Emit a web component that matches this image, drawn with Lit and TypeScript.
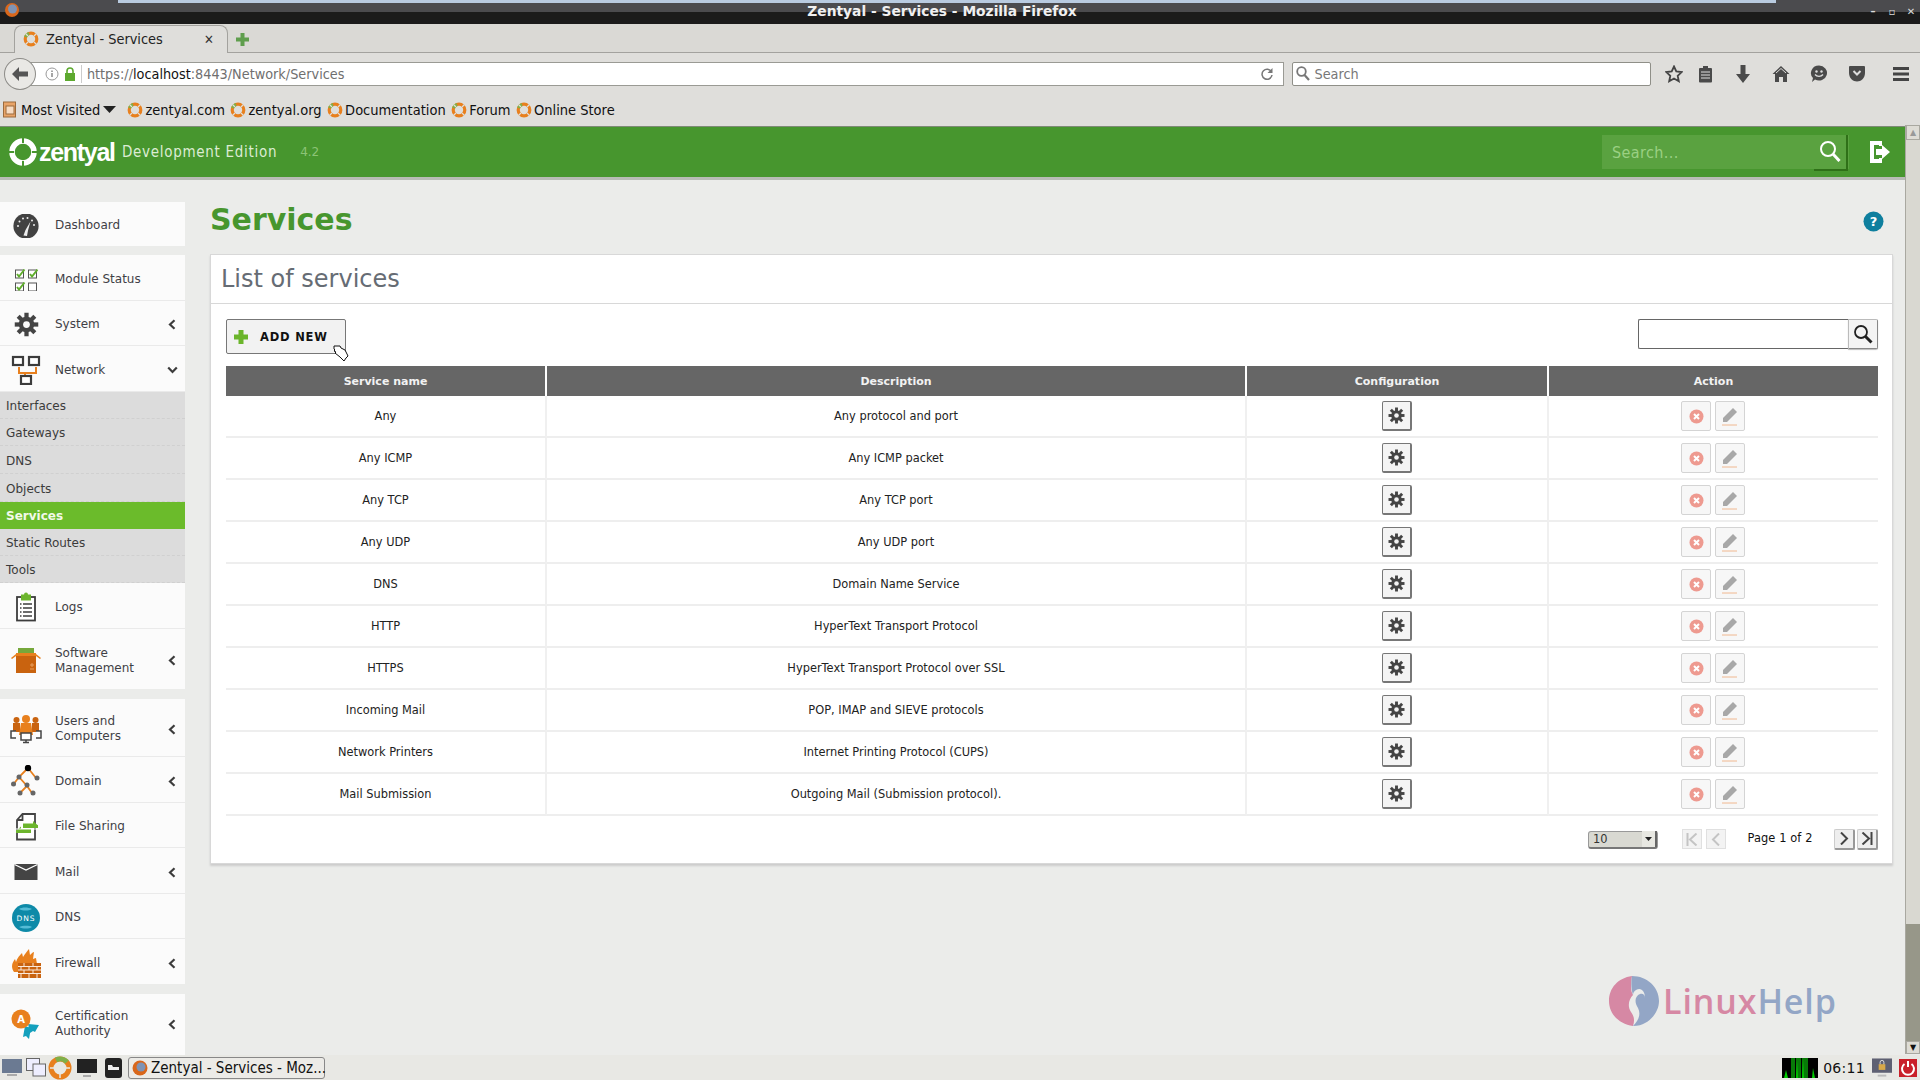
import { LitElement, html, css, svg } from "lit";
import { customElement } from "lit/decorators.js";

const gearShape = (c: string, hole: string) => svg`
  ${[0, 45, 90, 135].map(a => svg`<rect x="8.3" y="0.6" width="3.4" height="18.8" fill=${c} transform="rotate(${a} 10 10)"/>`)}
  <circle cx="10" cy="10" r="6.2" fill=${c}/><circle cx="10" cy="10" r="2.7" fill=${hole}/>`;
const gear = (s: number, c = "#444", hole = "#f4f4f4") => html`<svg width=${s} height=${s} viewBox="0 0 20 20" class="ic">${gearShape(c, hole)}</svg>`;

const chevL = html`<svg width="8" height="11" viewBox="0 0 8 11" class="ic"><path d="M6.5 1.2 2 5.5l4.5 4.3" fill="none" stroke="#3c3c3c" stroke-width="2.2"/></svg>`;
const chevD = html`<svg width="11" height="8" viewBox="0 0 11 8" class="ic"><path d="M1.2 1.5 5.5 6l4.3-4.5" fill="none" stroke="#3c3c3c" stroke-width="2.2"/></svg>`;

const check = (x: number, y: number, on: boolean) => svg`<rect x=${x} y=${y} width="8" height="8" fill="#fff" stroke="#555" stroke-width="1"/>${on ? svg`<path d="M${x + 1.5} ${y + 4}l2 2.5 5.5-7" fill="none" stroke="#5fae2c" stroke-width="2"/>` : ""}`;

const icons: Record<string, any> = {
  dash: html`<svg width="26" height="24" viewBox="0 0 26 24"><circle cx="13" cy="12" r="12.6" fill="#424242"/><g fill="#eee"><circle cx="5" cy="12" r="1"/><circle cx="6.5" cy="7.5" r="1"/><circle cx="10" cy="4.5" r="1"/><circle cx="14.5" cy="4" r="1"/><circle cx="19" cy="6.5" r="1"/><circle cx="21" cy="11" r="1"/></g><path d="M10.5 21.5 12.5 16l5-8.5-2.5 9-1 5.5z" fill="#eee"/></svg>`,
  mod: html`<svg width="24" height="24" viewBox="0 0 24 24">${check(1.5, 3, true)}${check(14.5, 3, true)}${check(1.5, 16, true)}${check(14.5, 16, false)}</svg>`,
  sys: gear(25, "#444", "#fbfbfb"),
  net: html`<svg width="30" height="30" viewBox="0 0 30 30"><path d="M9 12v6h17v-6M15 18v5" transform="translate(-1 0)" fill="none" stroke="#e8801e" stroke-width="2"/><g fill="#fff" stroke="#3c3c3c" stroke-width="2.2"><rect x="2" y="2" width="10" height="8"/><rect x="18" y="2" width="10" height="8"/><rect x="10" y="21" width="10" height="8"/></g></svg>`,
  logs: html`<svg width="22" height="30" viewBox="0 0 22 30"><rect x="2" y="5" width="18" height="23.500" fill="#fff" stroke="#3c3c3c" stroke-width="1.800"/><path d="M6 2.500h10v6H6z" fill="#6cb52d"/><circle cx="11" cy="2.500" r="2" fill="#6cb52d"/><g stroke="#3c3c3c" stroke-width="1.500"><path d="M8 12h9M8 16h9M8 20h9M8 24h9M5 12h1.500M5 16h1.500M5 20h1.500M5 24h1.500"/></g></svg>`,
  soft: html`<svg width="30" height="28" viewBox="0 0 30 28"><rect x="7" y="1" width="16" height="6" fill="#76a83b"/><path d="M5 7h20v19H5z" fill="#c9630f"/><path d="M5 7 0 11l1 1 4-3zM25 7l5 4-1 1-4-3z" fill="#e8801e"/><path d="M5 6h20v3H5z" fill="#e8801e"/><path d="M19 18h4M21 16v4M19 22h4" stroke="#e8a060" stroke-width="1"/></svg>`,
  users: html`<svg width="32" height="30" viewBox="0 0 32 30"><g fill="#c9630f"><circle cx="6.500" cy="6" r="3"/><path d="M3 9h7v9H3z"/><circle cx="25.500" cy="6" r="3"/><path d="M22 9h7v9h-7z"/></g><g fill="#e8801e"><circle cx="16" cy="5" r="4"/><path d="M11 9h10l2 12H9z"/></g><path d="M6 17H1v7h5M26 17h5v7h-5" fill="#fff" stroke="#444" stroke-width="1.500"/><rect x="11" y="19" width="10" height="7" fill="#fff" stroke="#444" stroke-width="1.500"/><path d="M13 28.500h6M16 26v2" stroke="#444" stroke-width="1.500"/></svg>`,
  domain: html`<svg width="32" height="32" viewBox="0 0 32 32"><g stroke="#e8801e" stroke-width="1.800" fill="none"><path d="M18 3 9 12 3 20M18 3l8 10M9 12l8 9-7 7M17 21l5 7"/></g><g fill="#666"><circle cx="9" cy="12" r="2.500"/><circle cx="27" cy="13" r="2.500"/><circle cx="3.500" cy="19" r="2.500"/><circle cx="17" cy="20" r="2.500"/><circle cx="10" cy="28" r="2.500"/><circle cx="23" cy="28" r="2.500"/></g><circle cx="18" cy="3" r="3.200" fill="#000"/></svg>`,
  file: html`<svg width="24" height="28" viewBox="0 0 24 28"><path d="M8.500 1H21v25.500H3V7z" fill="#fff" stroke="#444" stroke-width="1.800"/><path d="M8.500 1v6H3" fill="none" stroke="#444" stroke-width="1.800"/><path d="M9 10.500h10V8l5 4.500h-15zM17 16H7v-2.500l-5 4.500 0 0h15z" fill="#6cb52d"/><path d="M2 15.500h22v1H2z" fill="#fff"/><path d="M9 12h15v3H9zM2 17h15v3H2z" fill="#6cb52d"/></svg>`,
  mail: html`<svg width="24" height="16" viewBox="0 0 24 16"><rect width="23" height="16" fill="#444" x=".5"/><path d="M.5.500 12 6 23.500.500" fill="none" stroke="#fff" stroke-width="1.200"/></svg>`,
  dns: html`<svg width="28" height="28" viewBox="0 0 28 28"><circle cx="14" cy="14" r="14" fill="#0e8aa8"/><path d="M7 5c3-2 9-2 13 0-4 2-9 2-13 0zM7 23c3-1 9-2 13 0-3 2-9 2-13 0z" fill="#55bcd6"/><text x="14" y="17" text-anchor="middle" font-size="7.500" font-family="DejaVu Sans, sans-serif" letter-spacing="1" fill="#fff">DNS</text></svg>`,
  fire: html`<svg width="30" height="30" viewBox="0 0 30 30"><path d="M3 24C-1 18 2 14 4 11l1 3c1-4 4-7 6-9l1 4c2-3 4-6 6-8l1 6c2-2 3-3 4-3l-1 7c2-1 3-1 3-1l1 6H8v8z" fill="#e8801e"/><rect x="7" y="15" width="23" height="15" fill="#c9630f"/><g stroke="#fbeadb" stroke-width="1" fill="none"><path d="M7 18.500h23M7 22h23M7 25.500h23M13 15v3.500M22 15v3.500M10 18.500V22M18 18.500V22M26 18.500V22M13 22v3.500M22 22v3.500M10 25.500V30M18 25.500V30M26 25.500V30"/></g></svg>`,
  cert: html`<svg width="30" height="30" viewBox="0 0 30 30"><path d="M14 17l6 2-2 11-3-3-3 1zM17 15l11 1-4 7-2-1-3 2z" fill="#14a0bd"/><circle cx="10" cy="10" r="9.500" fill="#e8801e"/><text x="10" y="14" text-anchor="middle" font-size="10" font-weight="700" font-family="DejaVu Sans, sans-serif" fill="#fff">A</text></svg>`,
};

interface Item { label: string[]; icon: string; h: number; chev?: "l" | "d"; }
const g1: Item[] = [
  { label: ["Module Status"], icon: "mod", h: 46 },
  { label: ["System"], icon: "sys", h: 45, chev: "l" },
  { label: ["Network"], icon: "net", h: 46, chev: "d" },
];
const subs = [["Interfaces", 27], ["Gateways", 27], ["DNS", 28], ["Objects", 28], ["Services", 27], ["Static Routes", 27], ["Tools", 27]] as [string, number][];
const g2: Item[] = [
  { label: ["Logs"], icon: "logs", h: 46 },
  { label: ["Software", "Management"], icon: "soft", h: 60, chev: "l" },
];
const g3: Item[] = [
  { label: ["Users and", "Computers"], icon: "users", h: 58, chev: "l" },
  { label: ["Domain"], icon: "domain", h: 46, chev: "l" },
  { label: ["File Sharing"], icon: "file", h: 45 },
  { label: ["Mail"], icon: "mail", h: 46, chev: "l" },
  { label: ["DNS"], icon: "dns", h: 45 },
  { label: ["Firewall"], icon: "fire", h: 45, chev: "l" },
];
const rows = [
  ["Any", "Any protocol and port"],
  ["Any ICMP", "Any ICMP packet"],
  ["Any TCP", "Any TCP port"],
  ["Any UDP", "Any UDP port"],
  ["DNS", "Domain Name Service"],
  ["HTTP", "HyperText Transport Protocol"],
  ["HTTPS", "HyperText Transport Protocol over SSL"],
  ["Incoming Mail", "POP, IMAP and SIEVE protocols"],
  ["Network Printers", "Internet Printing Protocol (CUPS)"],
  ["Mail Submission", "Outgoing Mail (Submission protocol)."],
];
const marks = ["zentyal.com", "zentyal.org", "Documentation", "Forum", "Online Store"];

@customElement("app-root")
export class AppRoot extends LitElement {
  static styles = css`
    :host { display: block; width: 1920px; height: 1080px; overflow: hidden; position: relative; font-family: "DejaVu Sans", sans-serif; background: #ebecea; color: #222; }
    * { box-sizing: border-box; }
    .ic { display: block; flex: none; }
    .cond { font-family: "DejaVu Sans Condensed", "DejaVu Sans", sans-serif; }

    .titlebar { height: 24px; background: linear-gradient(#4b4b4e 0 12px, #1b1b1b 12px); display: flex; flex-direction: column; position: relative; }
    .topline { height: 3px; background: #b9cbe0; margin: 0 144px 0 118px; }
    .titlebar .t { position: absolute; left: 0; right: 36px; top: 3px; text-align: center; color: #f0f0f0; font-weight: 700; font-size: 13.8px; }
    .winlogo { position: absolute; left: 4px; top: 2px; }
    .winbtns { position: absolute; right: 4px; top: 6px; display: flex; gap: 9px; color: #ddd; font-size: 10px; font-weight: 700; }
    .winbtns span { width: 10px; text-align: center; line-height: 12px; }

    .tabbar { height: 29px; background: #dad9d5; border-bottom: 1px solid #a3a29e; display: flex; align-items: flex-end; padding-left: 14px; }
    .tab { width: 214px; height: 28px; margin-bottom: -1px; background: #dfdedb; border: 1px solid #a3a29e; border-bottom: 0; border-radius: 8px 8px 0 0; display: flex; align-items: center; padding: 0 0 1px 8px; font-size: 14.4px; color: #222; }
    .tab .lbl { margin-left: 7px; width: 158px; }
    .tab .x { font-weight: 700; font-size: 13px; color: #333; }
    .newtab { margin: 0 0 6px 8px; }

    .nav { height: 40px; background: #dfdedb; display: flex; align-items: center; padding: 1px 0 0 4px; position: relative; }
    .back { width: 32px; height: 32px; border-radius: 50%; border: 1px solid #8d8c88; background: #e9e8e5; display: flex; align-items: center; justify-content: center; margin-right: -6px; position: relative; z-index: 1; }
    .urlbox { width: 1259px; height: 24px; background: #fff; border: 1px solid #9a9a94; display: flex; align-items: center; padding-left: 14px; font-size: 14.3px; color: #6f6f6f; gap: 5px; }
    .urlbox b { font-weight: 400; color: #111; }
    .sep { width: 1px; height: 18px; background: #ccc; }
    .reload { margin-left: auto; margin-right: 9px; }
    .searchbox { width: 361px; height: 24px; margin-left: 8px; background: #fff; border: 1px solid #8f8f88; border-radius: 2px; display: flex; align-items: center; padding-left: 3px; gap: 5px; font-size: 14.3px; color: #777; }
    .tools { display: flex; align-items: center; margin-left: 12px; }
    .tools > div { width: 38px; display: flex; justify-content: center; }
    .tools > div:first-child { width: 22px; margin-right: 1px; }
    .tools > div:last-child { margin-left: 6px; }

    .marks { height: 33px; background: #dfdedb; display: flex; align-items: center; font-size: 14.5px; color: #111; padding-left: 3px; }
    .mark { display: flex; align-items: center; gap: 2px; margin-right: 5.5px; }
    .mv { display: flex; align-items: center; margin-right: 11px; gap: 5px; }

    .green { height: 51px; background: #47962e; border-top: 1px solid #7e8a76; display: flex; align-items: center; position: relative; margin-right: 15px; color: #fff; }
    .logo { display: flex; align-items: center; margin-left: 9px; font-size: 25px; font-weight: 700; letter-spacing: -1.3px; font-family: "Liberation Sans", sans-serif; gap: 2px; width: 115px; }
    .ed { font-size: 15px; letter-spacing: .7px; color: #dcecd3; margin-left: -2px; }
    .ver { font-size: 12px; color: #8cc476; margin-left: 23px; }
    .gs { margin-left: auto; width: 247px; height: 34px; background: #5aa240; display: flex; align-items: center; justify-content: space-between; padding: 0 1px 0 10px; font-size: 16px; letter-spacing: .4px; color: #9bd083; }
    .gs .go { width: 34px; height: 36px; margin-bottom: -2px; border-right: 2px solid #2f7018; border-bottom: 2px solid #2f7018; display: flex; align-items: center; justify-content: center; padding-bottom: 2px; }
    .logout { margin: 0 15px 0 21px; }

    .content { display: flex; height: 878px; }
    .side { width: 185px; flex: none; display: flex; flex-direction: column; border-top: 3px solid #b8bcb5; padding-top: 22px; font-size: 12px; color: #3f3f46; overflow: hidden; }
    .grp { background: #fbfbfb; margin-bottom: 10px; display: flex; flex-direction: column; flex: none; }
    .grp.g1 { margin-bottom: 9px; }
    .item { display: flex; align-items: center; border-bottom: 1px solid #eaeaea; flex: none; padding-top: 3px; }
    .item:last-child { border-bottom: 0; }
    .item .i { width: 52px; display: flex; justify-content: center; flex: none; }
    .item .l { margin-left: 3px; line-height: 15px; }
    .item .c { margin-left: auto; margin-right: 7px; width: 12px; display: flex; justify-content: center; }
    .sub { background: #dcdcdc; padding: 2px 0 0 6px; display: flex; align-items: center; border-bottom: 1px dashed #d0d0d0; font-size: 12px; color: #3b3b3b; flex: none; }
    .sub.on { background: #6bbb2b; color: #f2f9e9; font-weight: 700; border-bottom: 0; padding-top: 0; }

    .main { flex: 1; border-top: 3px solid #b8bcb5; padding: 0 12px 0 25px; position: relative; min-width: 0; }
    .head { height: 74px; display: flex; align-items: center; justify-content: space-between; padding-top: 4px; }
    h1 { margin: 0; font-size: 30px; font-weight: 700; color: #47962e; }
    .help { margin-right: 9px; margin-top: 5px; }
    .card { background: #fff; border: 1px solid #d8d8d8; box-shadow: 0 2px 2px #ccc; height: 610px; }
    .card h2 { margin: 0; height: 49px; padding: 0 0 0 10px; display: flex; align-items: center; font-size: 24px; font-weight: 400; color: #666c74; border-bottom: 1px solid #d8d8d8; }
    .body { padding: 15px 15px 0; }
    .bar { display: flex; justify-content: space-between; height: 47px; margin-right: -1px; }
    .add { width: 120px; height: 35px; background: #f2f2f2; border: 1px solid #777; border-radius: 2px; display: flex; align-items: center; padding: 1px 0 0 7px; gap: 12px; font-size: 11.5px; font-weight: 700; letter-spacing: .8px; color: #111; }
    .find { display: flex; height: 30px; }
    .find .in { width: 210px; border: 1px solid #666; border-right: 0; border-radius: 2px 0 0 2px; background: #fff; }
    .find .bt { width: 30px; background: #f4f4f4; border: 1px solid #bbb; border-right-color: #888; border-bottom-color: #888; display: flex; align-items: center; justify-content: center; border-radius: 0 2px 2px 0; box-shadow: 0 1px 1px #bbb; }
    .grid { display: grid; grid-template-columns: 321px 700px 302px 329px; }
    .th { height: 30px; background: #666; color: #f2f2f2; font-size: 11px; font-weight: 700; display: flex; align-items: center; justify-content: center; border-right: 2px solid #fff; }
    .th:nth-child(4n) { border-right: 0; }
    .td { height: 42px; font-size: 11.4px; color: #222; display: flex; align-items: center; justify-content: center; border-right: 2px solid #f0f0f0; border-bottom: 2px solid #eee; }
    .td.last { border-right: 0; gap: 4px; padding-right: 1px; }
    .gb { width: 30px; height: 30px; background: #f4f4f4; border: 1px solid #777; border-right-width: 2px; border-bottom-width: 2px; border-radius: 2px; display: flex; align-items: center; justify-content: center; }
    .ab { width: 30px; height: 30px; background: #f7f7f7; border: 1px solid #d4d4d4; border-radius: 2px; display: flex; align-items: center; justify-content: center; }
    .pager { display: flex; align-items: center; height: 44px; padding-top: 2px; margin-right: -1px; justify-content: flex-end; font-size: 11.4px; color: #111; }
    .sel { width: 70px; height: 18px; background: #d9d9d2; border: 1px solid #999; border-radius: 3px; display: flex; align-items: center; justify-content: space-between; padding-left: 4px; margin-right: 24px; border-bottom: 2px solid #777; color: #333; margin-top: 1px; }
    .sel i { width: 15px; height: 16px; background: #e8e8e2; border-right: 2px solid #666; display: flex; align-items: center; justify-content: center; font-style: normal; }
    .pg { width: 20px; height: 20px; background: #f3f3f3; border: 1px solid #e0e0e0; display: flex; align-items: center; justify-content: center; margin-right: 4px; }
    .pg.on { width: 21px; height: 21px; background: #eee; border: 1px solid #ccc; border-right: 2px solid #999; border-bottom: 2px solid #999; border-radius: 2px; margin-right: 2px; }
    .pt { width: 104px; padding-right: 4px; text-align: center; letter-spacing: .1px; margin-top: -2px; }

    .wm { position: absolute; display: flex; align-items: center; gap: 3px; font-family: "Open Sans", sans-serif; font-size: 34px; font-weight: 600; letter-spacing: .9px; }
    .wm .a { color: #d688a4; }
    .wm .b { color: #93a6c6; }
    .cursor { position: absolute; }

    .sb { width: 15px; flex: none; background: #d9d8d1; border-left: 1px solid #a9a8a0; display: flex; flex-direction: column; margin-top: -52px; height: 929px; }
    .sbb { height: 15px; background: #dedcd5; border: 1px solid #a9a8a0; display: flex; align-items: center; justify-content: center; font-size: 8px; color: #999; flex: none; }
    .track { flex: 1; }
    .thumb { height: 117px; background: #979789; flex: none; }

    .task { height: 25px; background: #e8e8e4; position: absolute; left: 0; right: 0; bottom: 0; display: flex; align-items: center; font-size: 14px; color: #111; }
    .task .ti { display: flex; align-items: center; gap: 3px; padding-left: 2px; width: 128px; }
    .wbtn { width: 197px; height: 22px; border: 1px solid #888; border-radius: 3px; background: #ecebe7; display: flex; align-items: center; gap: 3px; padding-left: 3px; font-size: 15px; white-space: nowrap; }
    .tray { margin-left: auto; display: flex; align-items: center; gap: 6px; padding-right: 3px; }
    .cpu { width: 36px; height: 20px; margin-right: -1px; }
  `;

  private item(it: Item) {
    return html`<div class="item" style="height:${it.h}px">
      <div class="i">${icons[it.icon]}</div>
      <div class="l">${it.label.map(x => html`<div>${x}</div>`)}</div>
      ${it.chev ? html`<div class="c">${it.chev === "l" ? chevL : chevD}</div>` : ""}
    </div>`;
  }

  render() {
    const pencil = html`<svg width="20" height="22" viewBox="0 0 20 22"><path d="M3 13 13 3l4 4L7 17H3z" fill="#a8a8a8"/><path d="M2 20h15" stroke="#f0b890" stroke-width="1"/></svg>`;
    const del = html`<svg width="15" height="15" viewBox="0 0 15 15"><circle cx="7.500" cy="7.500" r="7" fill="#ee9a90"/><path d="m5 5 5 5m0-5-5 5" stroke="#fff" stroke-width="2"/></svg>`;
    return html`
      <div class="titlebar">
        <div class="topline"></div>
        <svg class="winlogo" width="16" height="16" viewBox="0 0 16 16"><circle cx="8" cy="8" r="7" fill="#d9671b"/><circle cx="8.500" cy="7" r="4.500" fill="#7f93b4"/></svg>
        <div class="t">Zentyal - Services - Mozilla Firefox</div>
        <div class="winbtns"><span>–</span><span>▫</span><span>✕</span></div>
      </div>
      <div class="tabbar cond">
        <div class="tab">${this.fav(16)}<span class="lbl">Zentyal - Services</span><span class="x">✕</span></div>
        <svg class="newtab" width="13" height="13" viewBox="0 0 13 13"><path d="M4.500 0h4v4.500H13v4H8.500V13h-4V8.500H0v-4h4.500z" fill="#5f9e4d"/></svg>
      </div>
      <div class="nav cond">
        <div class="back"><svg width="16" height="14" viewBox="0 0 16 14"><path d="M7 0 0 7l7 7V9.500h9v-5H7z" fill="#555"/></svg></div>
        <div class="urlbox">
          <svg width="14" height="14" viewBox="0 0 14 14" class="ic"><circle cx="7" cy="7" r="6" fill="none" stroke="#999"/><path d="M7 6v4M7 3.500v1.500" stroke="#888" stroke-width="1.500"/></svg>
          <svg width="12" height="14" viewBox="0 0 12 14" class="ic"><path d="M3 6V4a3 3 0 0 1 6 0v2" fill="none" stroke="#5da92f" stroke-width="1.600"/><rect x="1" y="6" width="10" height="8" fill="#5da92f"/></svg>
          <div class="sep"></div>
          <span>https://<b>localhost</b>:8443/Network/Services</span>
          <svg class="reload" width="14" height="14" viewBox="0 0 14 14"><path d="M11.500 5A5 5 0 1 0 12 8" fill="none" stroke="#777" stroke-width="1.500"/><path d="M12.500 1v5h-5z" fill="#777"/></svg>
        </div>
        <div class="searchbox">
          <svg width="14" height="15" viewBox="0 0 14 15" class="ic"><circle cx="5.500" cy="5.500" r="4.300" fill="none" stroke="#777" stroke-width="1.800"/><path d="m8.500 9 4.500 5" stroke="#777" stroke-width="2.200"/></svg>
          <span>Search</span>
        </div>
        <div class="tools">
          <div><svg width="18" height="18" viewBox="0 0 18 18"><path d="m9 1.500 2.300 5 5.400.6-4 3.700 1.100 5.400L9 13.500l-4.800 2.700 1.100-5.400-4-3.700 5.400-.6z" fill="none" stroke="#444" stroke-width="1.800"/></svg></div>
          <div><svg width="15" height="18" viewBox="0 0 15 18"><rect x="1" y="3" width="13" height="14.500" rx="1" fill="#4a4a4a"/><rect x="5" y="1" width="5" height="3" fill="#4a4a4a"/><path d="M3 7h9M3 10h9M3 13h9" stroke="#ddd" stroke-width="1"/></svg></div>
          <div><svg width="16" height="18" viewBox="0 0 16 18"><path d="M5.500 0h5v9H15l-7 9-7-9h4.500z" fill="#4a4a4a"/></svg></div>
          <div><svg width="18" height="18" viewBox="0 0 18 18"><path d="M9 1 0.500 9H3v8h4v-5h4v5h4V9h2.500z" fill="#4a4a4a"/><path d="M4 8 9 3.500 14 8" fill="none" stroke="#dfdedb"/></svg></div>
          <div><svg width="18" height="18" viewBox="0 0 18 18"><path d="M9 .5a8 7.500 0 1 1-4 14L2 17l1-4A8 7.500 0 0 1 9 .5z" fill="#4a4a4a"/><circle cx="6.500" cy="6.500" r="1.200" fill="#ddd"/><circle cx="11.500" cy="6.500" r="1.200" fill="#ddd"/><path d="M5 9.500c2 2.500 6 2.500 8 0" fill="none" stroke="#ddd" stroke-width="1.400"/></svg></div>
          <div><svg width="16" height="17" viewBox="0 0 16 17"><path d="M1 1h14a1 1 0 0 1 1 1v6c0 5-4 8.500-8 8.500S0 13 0 8V2a1 1 0 0 1 1-1z" fill="#4a4a4a"/><path d="m4.500 6 3.500 3.500L11.500 6" fill="none" stroke="#ddd" stroke-width="2"/></svg></div>
          <div><svg width="16" height="14" viewBox="0 0 16 14"><path d="M0 0h16v3H0zM0 5.500h16v3H0zM0 11h16v3H0z" fill="#444"/></svg></div>
        </div>
      </div>
      <div class="marks cond">
        <div class="mv">
          <svg width="13" height="17" viewBox="0 0 13 17" class="ic"><rect x="0.500" y="1" width="12" height="15" fill="#e9a468" stroke="#9b6a3c"/><rect x="3" y="5" width="8" height="8" fill="#f7dcc3" stroke="#9b6a3c"/></svg>
          <span>Most Visited</span>
          <svg width="13" height="7" viewBox="0 0 13 7" class="ic" style="margin-left:-2px"><path d="M0 0h13L6.500 7z" fill="#222"/></svg>
        </div>
        ${marks.map(m => html`<div class="mark">${this.fav(16)}<span>${m}</span></div>`)}
      </div>
      <div class="green">
        <div class="logo">
          <svg width="28" height="28" viewBox="0 0 28 28" class="ic"><circle cx="14" cy="14" r="11" fill="none" stroke="#fff" stroke-width="5.500"/><g fill="#47962e"><rect x="0" y="13" width="5" height="2"/><rect x="23" y="13" width="5" height="2"/><rect x="13" y="0" width="2" height="5"/><rect x="13" y="23" width="2" height="5"/></g></svg>
          <span>zentyal</span>
        </div>
        <span class="ed cond">Development Edition</span>
        <span class="ver">4.2</span>
        <div class="gs cond"><span>Search...</span>
          <div class="go"><svg width="22" height="22" viewBox="0 0 22 22"><circle cx="9" cy="9" r="7" fill="none" stroke="#fff" stroke-width="2"/><path d="m14 14 6.500 7" stroke="#fff" stroke-width="3"/></svg></div>
        </div>
        <svg class="logout" width="20" height="22" viewBox="0 0 20 22"><path d="M0 0h12v5H9V4H4v14h5v-1h3v5H0z" fill="#fff"/><path d="M6 8h6V4l8 7-8 7v-4H6z" fill="#fff"/></svg>
      </div>
      <div class="content">
        <aside class="side">
          <div class="grp g1">${this.item({ label: ["Dashboard"], icon: "dash", h: 44 })}</div>
          <div class="grp">
            ${g1.map(i => this.item(i))}
            ${subs.map(([s, h]) => html`<div class="sub ${s === "Services" ? "on" : ""}" style="height:${h}px">${s}</div>`)}
            ${g2.map(i => this.item(i))}
          </div>
          <div class="grp">${g3.map(i => this.item(i))}</div>
          <div class="grp" style="height:61px">${this.item({ label: ["Certification", "Authority"], icon: "cert", h: 57, chev: "l" })}</div>
        </aside>
        <main class="main">
          <div class="head"><h1>Services</h1>
            <svg class="help" width="21" height="21" viewBox="0 0 21 21"><circle cx="10.500" cy="10.500" r="10" fill="#0e7f9e"/><text x="10.500" y="15" text-anchor="middle" font-family="DejaVu Sans, sans-serif" font-weight="700" font-size="13" fill="#fff">?</text></svg>
          </div>
          <section class="card">
            <h2>List of services</h2>
            <div class="body">
              <div class="bar">
                <div class="add"><svg width="14" height="14" viewBox="0 0 14 14" class="ic"><path d="M4.500 0h5v4.500H14v5H9.500V14h-5V9.500H0v-5h4.500z" fill="#6bb52b"/></svg><span>ADD NEW</span></div>
                <div class="find"><div class="in"></div><div class="bt"><svg width="20" height="20" viewBox="0 0 20 20"><circle cx="8" cy="8" r="6" fill="none" stroke="#222" stroke-width="1.800"/><path d="m12.500 12.500 6 6" stroke="#222" stroke-width="3"/></svg></div></div>
              </div>
              <div class="grid">
                <div class="th">Service name</div><div class="th">Description</div><div class="th">Configuration</div><div class="th">Action</div>
                ${rows.map(r => html`
                  <div class="td">${r[0]}</div><div class="td">${r[1]}</div>
                  <div class="td"><div class="gb">${gear(17, "#444", "#f4f4f4")}</div></div>
                  <div class="td last"><div class="ab">${del}</div><div class="ab">${pencil}</div></div>
                `)}
              </div>
              <div class="pager">
                <div class="sel"><span>10</span><i><svg width="7" height="4" viewBox="0 0 7 4"><path d="M0 0h7L3.500 4z" fill="#222"/></svg></i></div>
                <div class="pg"><svg width="12" height="13" viewBox="0 0 12 13"><path d="M1.500 0v13M10.500 .500 4 6.500l6.500 6" fill="none" stroke="#c4c4c4" stroke-width="2"/></svg></div>
                <div class="pg"><svg width="10" height="13" viewBox="0 0 10 13"><path d="M8 .500 2 6.500l6 6" fill="none" stroke="#c4c4c4" stroke-width="2"/></svg></div>
                <div class="pt">Page 1 of 2</div>
                <div class="pg on"><svg width="10" height="13" viewBox="0 0 10 13"><path d="M2 .500 8 6.500l-6 6" fill="none" stroke="#444" stroke-width="2"/></svg></div>
                <div class="pg on" style="margin-right:0"><svg width="12" height="13" viewBox="0 0 12 13"><path d="M10.500 0v13M1.500 .500 8 6.500l-6.500 6" fill="none" stroke="#444" stroke-width="2"/></svg></div>
              </div>
            </div>
          </section>
          <div class="wm" style="left:1423px;top:795px">
            <svg width="52" height="52" viewBox="0 0 52 52" class="ic"><path d="M24 1C10 3 1 13 1 26c0 13 10 23 24 25 2-6 1-10-2-14-4-6-2-13 2-17-3-5-2-13-1-19z" fill="#d688a4"/><path d="M24 1c15 0 27 11 27 25 0 9-6 18-14 22-3 2-7 3-12 3 6-6 8-12 5-18-4-6-3-12 2-14 3-1 5 1 5 4 0-7-4-11-9-8-2 1-3 3-3 5-2-6-2-13-1-19z" fill="#93a6c6"/></svg>
            <span><span class="a">Linux</span><span class="b">Help</span></span>
          </div>
          <svg class="cursor" style="left:148px;top:164px" width="16" height="18" viewBox="0 0 16 18"><path d="M1 2h6l1 2 4 2 3 6-2 2-2 3-4-4-5-4 1-1-2-1 1-1-1-1z" fill="#fff" stroke="#111" stroke-width="1"/></svg>
        </main>
        <div class="sb">
          <div class="sbb">▲</div>
          <div class="track"></div>
          <div class="thumb"></div>
          <div class="sbb" style="color:#111;height:13px">▼</div>
        </div>
      </div>
      <div class="task">
        <div class="ti">
          <svg width="21" height="21" viewBox="0 0 21 21" class="ic"><rect y="2" width="20" height="14" fill="#6b7a92"/><path d="M5 18h10" stroke="#aaa" stroke-width="2"/></svg>
          <svg width="20" height="19" viewBox="0 0 20 19" class="ic"><rect x=".5" y=".5" width="13" height="12" fill="#eef" stroke="#666"/><rect x="7" y="6" width="12.500" height="12" fill="#eef" stroke="#666"/></svg>
          <div style="margin-left:-1px">${this.bigRing()}</div>
          <svg width="20" height="20" viewBox="0 0 20 20" class="ic" style="margin-left:2px"><rect y="1" width="20" height="14" fill="#222"/><path d="M6 18h8" stroke="#aaa" stroke-width="2"/></svg>
          <svg width="17" height="20" viewBox="0 0 17 20" class="ic" style="margin-left:5px"><rect width="17" height="20" rx="3" fill="#222"/><path d="M3 7h4l1 2h6v3H3z" fill="#eee"/></svg>
        </div>
        <div class="wbtn cond">
          <svg width="16" height="16" viewBox="0 0 16 16" class="ic"><circle cx="8" cy="8" r="7.500" fill="#d9671b"/><circle cx="9" cy="7" r="4.500" fill="#7f93b4"/></svg>
          <span>Zentyal - Services - Moz...</span>
        </div>
        <div class="tray">
          <svg class="cpu" viewBox="0 0 36 20"><rect width="36" height="20" fill="#000"/><rect x="9" width="17" height="20" fill="#087a08"/><path d="M2 20l2-8 2 8zM14 20l1-18 1 18zM20 20l1-20 1 20zM30 20l1-10 2 10z" fill="#0c0"/><path d="M13 0h1v20h-1zM19 0h1v20h-1z" fill="#000"/></svg>
          <span style="letter-spacing:.3px">06:11</span>
          <svg width="20" height="20" viewBox="0 0 21 20" class="ic" style="margin-left:1px"><rect width="21" height="15" fill="#5e6072"/><rect x="7" y="6" width="7" height="6" fill="#d8a94a"/><path d="M8.500 6V4a2 2 0 0 1 4 0v2" fill="none" stroke="#ddd"/><path d="M6 18h9" stroke="#bbb" stroke-width="2"/></svg>
          <svg width="18" height="18" viewBox="0 0 18 18" class="ic" style="margin-left:1px"><rect width="18" height="18" fill="#c9202a"/><path d="M5.500 5a6 6 0 1 0 7 0" fill="none" stroke="#fff" stroke-width="2"/><path d="M9 2v6" stroke="#fff" stroke-width="2"/></svg>
        </div>
      </div>
    `;
  }

  private fav(s: number) {
    return html`<svg width=${s} height=${s} viewBox="0 0 16 16" class="ic"><circle cx="8" cy="8" r="5.800" fill="none" stroke="#e8801e" stroke-width="3.200"/><path d="M2.600 6A5.800 5.800 0 0 1 6 2.400" fill="none" stroke="#7fb04a" stroke-width="3.200"/><g stroke="#dfdedb" stroke-width="1.200"><path d="M2.500 2.500 5 5M13.500 2.500 11 5M2.500 13.500 5 11M13.500 13.500 11 11"/></g></svg>`;
  }

  private bigRing() {
    return html`<svg width="24" height="24" viewBox="0 0 24 24" class="ic"><circle cx="12" cy="12" r="9" fill="none" stroke="#e8801e" stroke-width="5"/><path d="M8 4a9 9 0 0 1 11 2" fill="none" stroke="#7fb04a" stroke-width="5"/><g stroke="#e8e8e4" stroke-width="1.500"><path d="M2 12h5M17 12h5M12 17v5"/></g></svg>`;
  }
}
